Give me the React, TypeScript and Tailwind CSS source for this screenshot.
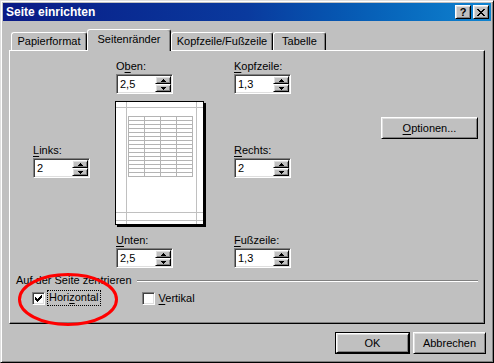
import React from 'react';

const raised =
  'border border-t-white border-l-white border-r-black border-b-black shadow-[inset_1px_1px_0_#dfdfdf,inset_-1px_-1px_0_#808080]';
const sunken =
  'border border-t-[#808080] border-l-[#808080] border-r-white border-b-white shadow-[inset_1px_1px_0_#404040,inset_-1px_-1px_0_#dfdfdf]';

const U: React.FC<{ children: React.ReactNode }> = ({ children }) => (
  <span className="underline underline-offset-[2px]">{children}</span>
);

const Arrow: React.FC<{ down?: boolean }> = ({ down }) => (
  <svg width="5" height="3" viewBox="0 0 5 3" shapeRendering="crispEdges">
    {down ? (
      <>
        <rect x="0" y="0" width="5" height="1" fill="#000" />
        <rect x="1" y="1" width="3" height="1" fill="#000" />
        <rect x="2" y="2" width="1" height="1" fill="#000" />
      </>
    ) : (
      <>
        <rect x="2" y="0" width="1" height="1" fill="#000" />
        <rect x="1" y="1" width="3" height="1" fill="#000" />
        <rect x="0" y="2" width="5" height="1" fill="#000" />
      </>
    )}
  </svg>
);

const Spin: React.FC<{ label: React.ReactNode; value: string; className?: string }> = ({
  label,
  value,
  className = '',
}) => (
  <div className={`flex flex-col w-[57px] ${className}`}>
    <div className="h-[14px] leading-[13px]">{label}</div>
    <div className={`h-[20px] flex bg-white p-[1px] ${sunken}`}>
      <div className="flex-1 pl-[2px] leading-[16px]">{value}</div>
      <div className="w-[16px] flex flex-col">
        <div className={`h-[8px] flex items-center justify-center bg-[#c0c0c0] ${raised}`}>
          <Arrow />
        </div>
        <div className={`h-[8px] flex items-center justify-center bg-[#c0c0c0] ${raised}`}>
          <Arrow down />
        </div>
      </div>
    </div>
  </div>
);

const Tab: React.FC<{ label: string; w: string; active?: boolean }> = ({ label, w, active }) => (
  <div
    className={`${w} flex items-center justify-center border-t border-l border-r rounded-t-[3px] border-t-white border-l-white border-r-black shadow-[inset_-1px_0_0_#808080] bg-[#c0c0c0] ${
      active ? 'h-[22px] -mb-px relative z-10 pb-[2px]' : 'h-[18px]'
    }`}
  >
    {label}
  </div>
);

const Check: React.FC<{ checked?: boolean }> = ({ checked }) => (
  <div className={`w-[13px] h-[13px] bg-white flex items-center justify-center ${sunken}`}>
    {checked && (
      <svg width="7" height="7" viewBox="0 0 7 7" shapeRendering="crispEdges">
        <path d="M0 2h1v1h1v1h1v-1h1v-1h1v-1h1v-1h1v3h-1v1h-1v1h-1v1h-1v1h-1v-1h-1v-1h-1z" fill="#000" />
      </svg>
    )}
  </div>
);

const Preview: React.FC = () => {
  const rows = Array.from({ length: 16 }, (_, i) => 15 + i * 4);
  const cols = [13, 29, 45, 61, 77];
  return (
    <svg width="91" height="126" viewBox="0 0 91 126" shapeRendering="crispEdges">
      <rect x="2" y="2" width="89" height="124" fill="#000" />
      <rect x="0.5" y="0.5" width="88" height="123" fill="#fff" stroke="#000" />
      <g stroke="#c0c0c0">
        <line x1="11.5" y1="1" x2="11.5" y2="123" />
        <line x1="81.5" y1="1" x2="81.5" y2="123" />
        <line x1="1" y1="6.5" x2="88" y2="6.5" />
        <line x1="1" y1="111.5" x2="88" y2="111.5" />
        <line x1="1" y1="119.5" x2="88" y2="119.5" />
      </g>
      <g stroke="#b4b4b4">
        {rows.map((y) => (
          <line key={y} x1="13" y1={y + 0.5} x2="78" y2={y + 0.5} />
        ))}
        {cols.map((x) => (
          <line key={x} x1={x + 0.5} y1="15" x2={x + 0.5} y2="76" />
        ))}
      </g>
    </svg>
  );
};

const CloseGlyph: React.FC = () => (
  <svg width="8" height="7" viewBox="0 0 8 7" shapeRendering="crispEdges">
    {Array.from({ length: 7 }, (_, i) => (
      <React.Fragment key={i}>
        <rect x={i} y={i} width="2" height="1" fill="#000" />
        <rect x={6 - i} y={i} width="2" height="1" fill="#000" />
      </React.Fragment>
    ))}
  </svg>
);

export default function App() {
  return (
    <div className="relative w-[494px] h-[363px] bg-[#c0c0c0] text-[11px] text-black font-['Liberation_Sans',Arial,sans-serif] border border-t-[#dfdfdf] border-l-[#dfdfdf] border-r-black border-b-black shadow-[inset_1px_1px_0_#fff,inset_-1px_-1px_0_#808080] p-[2px] flex flex-col">
      {/* title bar */}
      <div className="h-[18px] flex items-center justify-between bg-gradient-to-r from-[#0a1a86] via-[#0a3a9e] to-[#1084d0] pl-[3px] pr-[2px]">
        <span className="text-white font-bold text-[12px] leading-[14px]">Seite einrichten</span>
        <div className="flex gap-[2px]">
          <div className={`w-[16px] h-[14px] flex items-center justify-center bg-[#c0c0c0] font-bold text-[11px] leading-none ${raised}`}>
            ?
          </div>
          <div className={`w-[16px] h-[14px] flex items-center justify-center bg-[#c0c0c0] ${raised}`}>
            <CloseGlyph />
          </div>
        </div>
      </div>

      {/* tabs */}
      <div className="mx-[6px] mt-[8px] flex flex-col">
        <div className="flex items-end h-[21px] pl-[2px]">
          <Tab label="Papierformat" w="w-[76px]" />
          <Tab label="Seitenränder" w="w-[84px]" active />
          <Tab label="Kopfzeile/Fußzeile" w="w-[102px]" />
          <Tab label="Tabelle" w="w-[53px]" />
        </div>

        {/* panel */}
        <div className="h-[274px] border border-t-white border-l-white border-r-black border-b-black shadow-[inset_-1px_-1px_0_#808080] pt-[9px] flex flex-col">
          <div className="flex pl-[23px]">
            <div className="mt-[84px]">
              <Spin label={<><U>L</U>inks:</>} value="2" />
            </div>
            <div className="ml-[25px] w-[91px] flex flex-col">
              <Spin label={<>O<U>b</U>en:</>} value="2,5" className="ml-[1px]" />
              <div className="mt-[7px]">
                <Preview />
              </div>
              <Spin label={<><U>U</U>nten:</>} value="2,5" className="ml-[1px] mt-[7px]" />
            </div>
            <div className="ml-[28px] flex flex-col">
              <Spin label={<><U>K</U>opfzeile:</>} value="1,3" />
              <Spin label={<><U>R</U>echts:</>} value="2" className="mt-[50px]" />
              <Spin label={<><U>F</U>ußzeile:</>} value="1,3" className="mt-[56px]" />
            </div>
            <div className="ml-[90px] mt-[57px]">
              <div className={`w-[97px] h-[22px] flex items-center justify-center ${raised}`}>
                <span>
                  <U>O</U>ptionen...
                </span>
              </div>
            </div>
          </div>

          <div className="mt-[6px] pl-[6px] pr-[6px] flex items-center h-[13px]">
            <span className="leading-[13px] whitespace-nowrap">Auf der Seite zentrieren</span>
            <div className="flex-1 ml-[5px] h-[2px] border-t border-t-[#808080] border-b border-b-white" />
          </div>

          <div className="mt-[3px] pl-[22px] flex items-center h-[16px]">
            <Check checked />
            <div className="ml-[2px] h-[16px] px-[1px] border border-dotted border-black leading-[13px]">
              Hori<U>z</U>ontal
            </div>
            <div className="ml-[41px]">
              <Check />
            </div>
            <span className="ml-[4px] leading-[13px]">
              <U>V</U>ertikal
            </span>
          </div>
        </div>
      </div>

      {/* dialog buttons */}
      <div className="mt-[8px] flex justify-end gap-[3px] pr-[5px]">
        <div className="w-[75px] h-[22px] border border-black">
          <div className={`w-full h-full flex items-center justify-center ${raised}`}>OK</div>
        </div>
        <div className={`w-[73px] h-[22px] flex items-center justify-center ${raised}`}>Abbrechen</div>
      </div>

      {/* red annotation */}
      <svg className="absolute left-[16px] top-[271px]" width="102" height="55" viewBox="0 0 102 55">
        <ellipse cx="51" cy="27.5" rx="48.5" ry="25" fill="none" stroke="#ff0000" strokeWidth="3" />
      </svg>
    </div>
  );
}
